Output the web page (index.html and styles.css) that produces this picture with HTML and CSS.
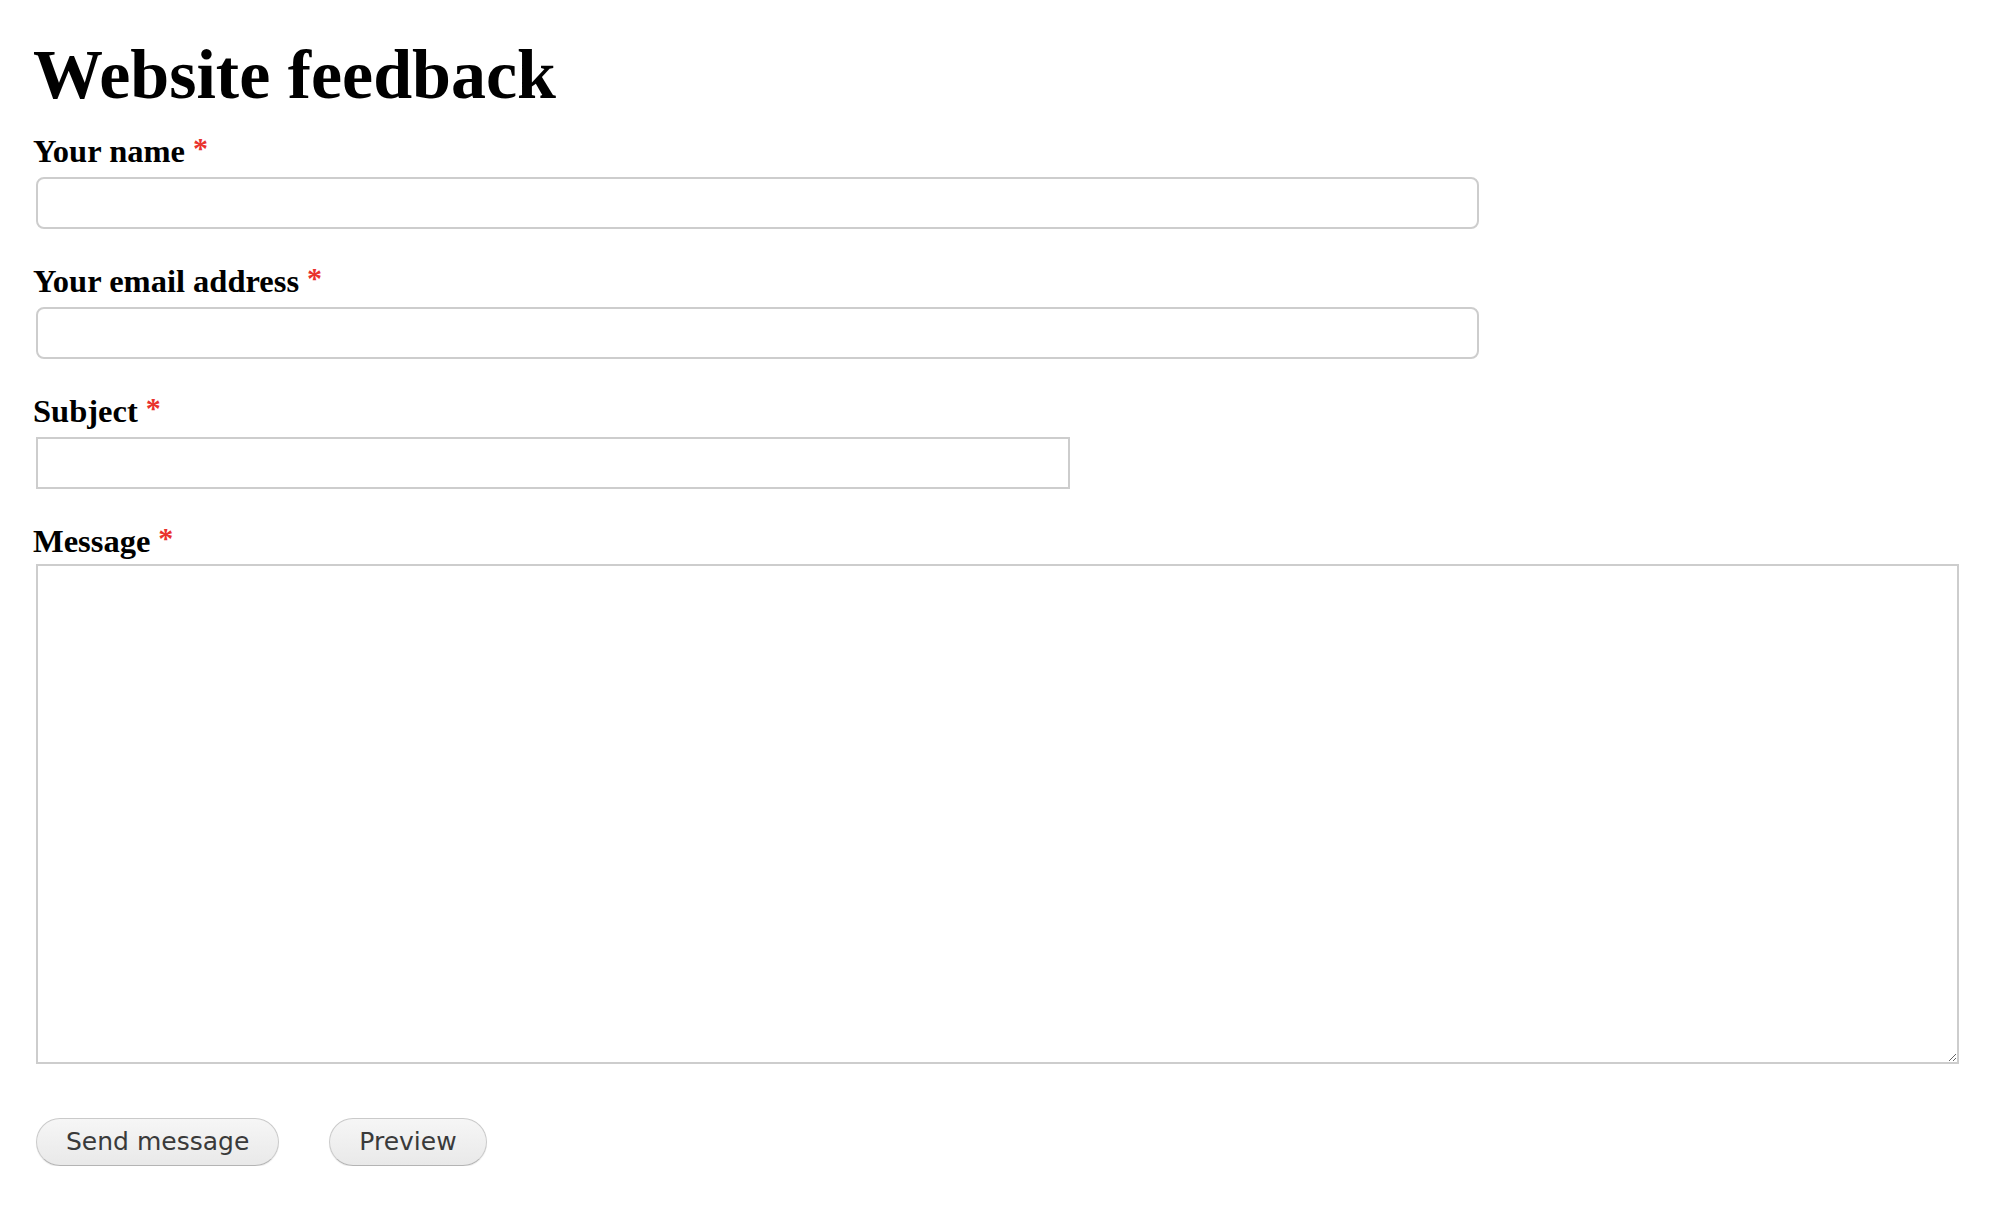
FILE: index.html
```html
<!DOCTYPE html>
<html lang="en">
<head>
<meta charset="utf-8">
<title>Website feedback</title>
<link rel="stylesheet" href="styles.css">
</head>
<body>
<main class="page">
  <h1 class="title">Website feedback</h1>
  <form class="form">
    <div class="field">
      <label class="label" for="name">Your name<span class="required">*</span></label>
      <input class="input input-rounded input-long" id="name" type="text">
    </div>
    <div class="field">
      <label class="label" for="email">Your email address<span class="required">*</span></label>
      <input class="input input-rounded input-long" id="email" type="email">
    </div>
    <div class="field">
      <label class="label" for="subject">Subject<span class="required">*</span></label>
      <input class="input input-subject" id="subject" type="text">
    </div>
    <div class="field field-message">
      <label class="label" for="message">Message<span class="required">*</span></label>
      <textarea class="textarea" id="message"></textarea>
    </div>
    <div class="actions">
      <button class="button" type="button">Send message</button>
      <button class="button" type="button">Preview</button>
    </div>
  </form>
</main>
</body>
</html>
```
FILE: styles.css
```css
html, body {
  margin: 0;
  padding: 0;
  background: #ffffff;
}

.page {
  padding: 33px 0 0 36px;
  font-family: "Liberation Serif", "Times New Roman", serif;
  color: #000;
}

.title {
  margin: 0;
  font-family: "Liberation Serif", "Times New Roman", serif;
  font-weight: 700;
  font-size: 70px;
  line-height: 83px;
  margin-left: -3px;
}

.form {
  margin-top: 16px;
  display: flex;
  flex-direction: column;
}

.field {
  display: flex;
  flex-direction: column;
  align-items: flex-start;
  margin-bottom: 33px;
}

.field-message {
  margin-bottom: 54px;
}

.label {
  display: block;
  font-weight: 700;
  font-size: 32.5px;
  line-height: 38px;
  margin-left: -3px;
  margin-bottom: 7px;
}

.field-message .label {
  margin-bottom: 4px;
}

.required {
  color: #e9322d;
  font-size: 30px;
  line-height: 0;
  margin-left: 8px;
  vertical-align: 4px;
}

.input {
  box-sizing: border-box;
  height: 52px;
  border: 2px solid #cdcdcd;
  background: #fff;
  margin: 0;
  padding: 0 10px;
  font-size: 24px;
  outline: none;
}

.input-rounded {
  border-radius: 8px;
}

.input-long {
  width: 1443px;
}

.input-subject {
  width: 1034px;
  border-radius: 0;
}

.textarea {
  box-sizing: border-box;
  width: 1923px;
  height: 500px;
  border: 2px solid #cdcdcd;
  margin: 0;
  padding: 6px;
  resize: vertical;
  font-size: 24px;
  outline: none;
}

.actions {
  display: flex;
  gap: 50px;
  align-items: center;
}

.button {
  box-sizing: border-box;
  height: 48px;
  padding: 0 29px;
  border: 1px solid #cacaca;
  border-bottom-color: #b4b4b4;
  border-radius: 24px;
  background: linear-gradient(#f6f6f6, #e9e9e9);
  box-shadow: 0 1px 1px rgba(0, 0, 0, 0.08);
  font-family: "DejaVu Sans", "Lucida Grande", sans-serif;
  font-size: 25px;
  color: #3a3a3a;
  line-height: 46px;
  cursor: pointer;
}
```
